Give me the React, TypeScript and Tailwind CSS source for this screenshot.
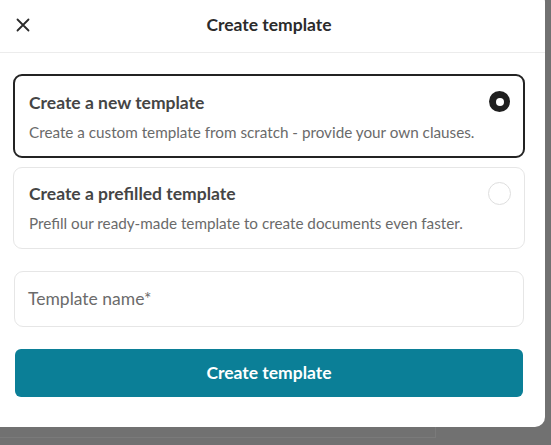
import React from "react";

export default function App() {
  const font = { fontFamily: "Lato, 'Noto Sans', sans-serif" };
  return (
    <div className="w-[551px] h-[445px] bg-[#717171] overflow-hidden" style={font}>
      <div className="w-[545px] h-[435px] -mt-[8px] pt-[8px] bg-white rounded-r-[10px] flex flex-col">
        <div className="h-[52px] flex items-center relative border-b border-[#ececec] shrink-0 box-content">
          <button className="absolute left-[16px] top-[18px] w-[14px] h-[14px] flex items-center justify-center">
            <svg width="14" height="14" viewBox="0 0 14 14" fill="none" stroke="#2b2b2b" strokeWidth="1.8" strokeLinecap="round">
              <path d="M1.5 1.5 L12.5 12.5 M12.5 1.5 L1.5 12.5" />
            </svg>
          </button>
          <div className="w-full text-center text-[17.5px] font-bold text-[#2b2b2b] -mt-[2px] pr-[7px]">Create template</div>
        </div>
        <div className="pl-[13px] pr-[20px] pt-[21px] flex flex-col">
          <div className="h-[84px] border-2 border-[#232323] rounded-[9px] pl-[14px] pr-[13px] pt-[16px] flex flex-col">
            <div className="flex items-start justify-between">
              <div className="text-[17.5px] font-bold text-[#454545] leading-[22px]">Create a new template</div>
              <div className="w-[21px] h-[21px] rounded-full bg-[#1f1f1f] flex items-center justify-center mt-[-1px]">
                <div className="w-[8px] h-[8px] rounded-full bg-white" />
              </div>
            </div>
            <div className="text-[15.25px] text-[#6a6a6a] mt-[8px] leading-[20px] whitespace-nowrap">Create a custom template from scratch - provide your own clauses.</div>
          </div>
          <div className="h-[82px] mt-[9px] border border-[#e6e6e6] rounded-[9px] pl-[15px] pr-[13px] pt-[15px] flex flex-col">
            <div className="flex items-start justify-between">
              <div className="text-[17.5px] font-bold text-[#454545] leading-[22px]">Create a prefilled template</div>
              <div className="w-[23px] h-[23px] rounded-full border border-[#dedede] mt-[-1px]" />
            </div>
            <div className="text-[15.25px] text-[#6a6a6a] mt-[8px] leading-[20px] whitespace-nowrap">Prefill our ready-made template to create documents even faster.</div>
          </div>
          <div className="h-[56px] mt-[22px] mx-[1px] border border-[#e6e6e6] rounded-[9px] px-[13px] flex items-center">
            <span className="text-[17.5px] text-[#6b6b6b]">Template name*</span>
          </div>
          <button className="h-[48px] mt-[22px] mx-[2px] bg-[#0b7f97] rounded-[6px] text-white text-[17.5px] font-bold">
            Create template
          </button>
        </div>
      </div>
      <div className="w-[436px] h-[11px] border-r border-b border-[#7a7a7a]" />
    </div>
  );
}
